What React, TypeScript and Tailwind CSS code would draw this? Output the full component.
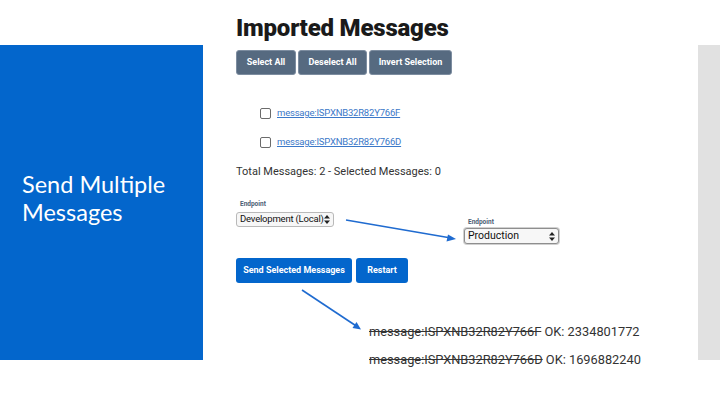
import React from "react";

function UpDown() {
  return (
    <svg width="6" height="9" viewBox="0 0 6 9" className="shrink-0">
      <path d="M3 0 L6 3.5 L0 3.5 Z" fill="#222" />
      <path d="M3 9 L6 5.5 L0 5.5 Z" fill="#222" />
    </svg>
  );
}

function Checkbox() {
  return <div className="w-[11px] h-[11px] rounded-[2px] border border-[#6b6b6b] bg-white shrink-0" />;
}

export default function App() {
  const font = { fontFamily: "Roboto, 'Noto Sans', sans-serif" };
  return (
    <div className="relative w-[720px] h-[405px] bg-white overflow-hidden" style={font}>
      <div className="flex h-full">
        <div className="w-[203px] h-[315px] mt-[45px] bg-[#0366cc] shrink-0 flex items-center">
          <div
            className="pl-[22px] mb-[10px] text-white text-[23.5px] leading-[28px]"
            style={{ fontFamily: "Lato, 'Open Sans', sans-serif" }}
          >
            Send Multiple
            <br />
            Messages
          </div>
        </div>

        <div className="flex-1 flex flex-col pl-[33px] pt-[15px]">
          <h1 className="h-[26px] text-[24px] leading-[26px] font-black text-[#1a1a1a] tracking-[-0.2px]">
            Imported Messages
          </h1>
          <div className="flex gap-[2px] mt-[9px]">
            <button className="w-[60px] h-[25px] rounded-[3px] bg-[#566a80] border border-[#7d8da0] text-white text-[9px] font-bold">
              Select All
            </button>
            <button className="w-[69px] h-[25px] rounded-[3px] bg-[#566a80] border border-[#7d8da0] text-white text-[9px] font-bold">
              Deselect All
            </button>
            <button className="w-[83px] h-[25px] rounded-[3px] bg-[#566a80] border border-[#7d8da0] text-white text-[9px] font-bold">
              Invert Selection
            </button>
          </div>

          <div className="flex flex-col gap-[9px] mt-[28px] pl-[24px]">
            <div className="h-[20px] flex items-center gap-[6px]">
              <Checkbox />
              <a className="text-[9.5px] tracking-[-0.2px] text-[#3b78c8] underline">message:ISPXNB32R82Y766F</a>
            </div>
            <div className="h-[20px] flex items-center gap-[6px]">
              <Checkbox />
              <a className="text-[9.5px] tracking-[-0.2px] text-[#3b78c8] underline">message:ISPXNB32R82Y766D</a>
            </div>
          </div>

          <div className="mt-[12px] h-[16px] leading-[16px] text-[11px] text-[#333]">
            Total Messages: 2 - Selected Messages: 0
          </div>

          <div className="flex mt-[19px]">
            <div className="flex flex-col w-[98px]">
              <div className="h-[10px] leading-[10px] text-[6.5px] font-bold text-[#4b5d74] pl-[4px]">Endpoint</div>
              <div className="mt-[3px] h-[15px] w-[98px] rounded-[3px] border border-[#b9b9b9] bg-[#f7f7f7] flex items-center justify-between pl-[3px] pr-[3px] text-[9.5px] tracking-[-0.2px] text-[#111] whitespace-nowrap">
                <span>Development (Local)</span>
                <UpDown />
              </div>
            </div>
            <div className="flex flex-col ml-[130px] mt-[18px]">
              <div className="h-[10px] leading-[10px] text-[6.5px] font-bold text-[#4b5d74] pl-[4px]">Endpoint</div>
              <div className="mt-[1px] h-[16px] w-[95px] rounded-[3px] border border-[#8e8e8e] bg-[#f7f7f7] flex items-center justify-between pl-[3px] pr-[3px] text-[10.5px] text-[#111] shadow-[0_0_0_1px_#d0d0d0]">
                <span>Production</span>
                <UpDown />
              </div>
            </div>
          </div>

          <div className="flex gap-[4px] mt-[14px]">
            <button className="w-[116px] h-[25px] rounded-[3px] bg-[#0366cc] text-white text-[9px] font-bold">
              Send Selected Messages
            </button>
            <button className="w-[52px] h-[25px] rounded-[3px] bg-[#0366cc] text-white text-[9px] font-bold">
              Restart
            </button>
          </div>

          <div className="flex flex-col gap-[8px] mt-[39px] pl-[133px] text-[12.8px] text-[#333]">
            <div className="h-[20px] leading-[20px]">
              <span className="line-through">message:ISPXNB32R82Y766F</span> OK: 2334801772
            </div>
            <div className="h-[20px] leading-[20px]">
              <span className="line-through">message:ISPXNB32R82Y766D</span> OK: 1696882240
            </div>
          </div>
        </div>

        <div className="w-[22px] h-[315px] mt-[45px] bg-[#e1e1e1] shrink-0" />
      </div>

      <svg className="absolute inset-0 pointer-events-none" width="720" height="405">
        <line x1="346" y1="220" x2="451" y2="238" stroke="#1f6bd0" strokeWidth="1.6" />
        <path d="M456 239 L448 234.5 L446.5 241.5 Z" fill="#1f6bd0" />
        <line x1="302" y1="290" x2="357" y2="326.5" stroke="#1f6bd0" strokeWidth="1.6" />
        <path d="M361 329.5 L352.5 328 L356.5 322 Z" fill="#1f6bd0" />
      </svg>
    </div>
  );
}
